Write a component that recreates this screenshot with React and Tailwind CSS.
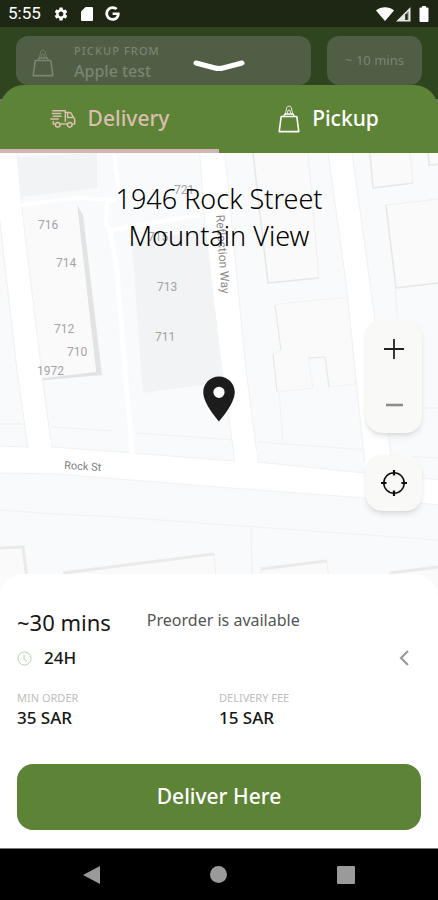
import React, { useState } from 'react';
import { FaGoogle } from 'react-icons/fa';
import { MdSettings, MdLocationOn } from 'react-icons/md';

const houses = [
  { n: '721', x: 174, y: 194 },
  { n: '716', x: 38, y: 229 },
  { n: '714', x: 56, y: 267 },
  { n: '715', x: 148, y: 241 },
  { n: '713', x: 157, y: 291 },
  { n: '712', x: 54, y: 333 },
  { n: '711', x: 155, y: 341 },
  { n: '710', x: 67, y: 356 },
  { n: '1972', x: 37, y: 375 },
];

function BagIcon({ className }) {
  return (
    <svg className={className} viewBox="0 0 22 28" fill="none" stroke="currentColor" aria-hidden="true">
      <path d="M3.2 11.5h15.6l2 15.1H1.2z" strokeWidth="1.6" strokeLinejoin="round" />
      <path d="M5.5 11.5 7 9h8l1.5 2.5" strokeWidth="1.3" />
      <path d="M7.4 8.8 8.6 3c.3-1.2 1-1.8 2.4-1.8s2.1.6 2.4 1.8l1.2 5.8M9.4 8.5l.6-3.3h2l.6 3.3" strokeOpacity="0.8" />
    </svg>
  );
}

function TruckIcon({ className }) {
  return (
    <svg className={className} viewBox="0 0 28 22" fill="none" stroke="currentColor" strokeWidth="1.6" strokeLinecap="round" strokeLinejoin="round" aria-hidden="true">
      <path d="M3 2h13.5v11.5M2.5 5h9M3.5 8H12M1 11h8M3.5 14v2.5h1.7M11.5 16.5h6.7" />
      <path d="M16.5 4H21c1 0 1.5.4 2 1.2l2.3 4.3c.9.5 1.3 1.2 1.3 2.2v4.8h-1.8M19 4v5.5h6" />
      <circle cx="8.3" cy="17.3" r="2.5" />
      <circle cx="21.3" cy="17.3" r="2.5" />
    </svg>
  );
}

function StatusBar() {
  return (
    <div className="flex h-[27px] items-center justify-between bg-[#1d2714] px-2 text-white">
      <div className="flex items-center gap-3">
        <span className="font-[Roboto,sans-serif] text-[17px]">5:55</span>
        <MdSettings className="size-4" />
        <svg className="h-[14px] w-3" viewBox="0 0 12 14" fill="currentColor" aria-hidden="true">
          <path d="M4.5 0H11a1 1 0 0 1 1 1v12a1 1 0 0 1-1 1H1a1 1 0 0 1-1-1V4.500z" />
        </svg>
        <FaGoogle className="size-[15px]" />
      </div>
      <div className="flex items-center gap-0.5">
        <svg className="h-4 w-[18px]" viewBox="0 0 18 16" fill="currentColor" aria-hidden="true">
          <path d="M0 4.5C5 .2 13 .2 18 4.5L9 15z" />
        </svg>
        <svg className="size-4" viewBox="0 0 16 16" aria-hidden="true">
          <path d="M0 15.5 14.5 1v14.5z" fill="#e5e7e3" />
          <path d="M9 8.5 12.5 5v9H9z" fill="#737a6e" />
          <path d="M9.5 8h2v6h-2z" fill="#1d2714" />
        </svg>
        <svg className="ml-1 h-4 w-3" viewBox="0 0 12 16" fill="currentColor" aria-hidden="true">
          <path d="M4 0h4v1.5h1.5a1 1 0 0 1 1 1V15a1 1 0 0 1-1 1h-7a1 1 0 0 1-1-1V2.5a1 1 0 0 1 1-1H4z" />
        </svg>
      </div>
    </div>
  );
}

function StreetMap() {
  return (
    <svg className="absolute inset-x-0 top-0 h-[calc(100%+24px)] w-full" viewBox="0 153 438 445" preserveAspectRatio="xMidYMid slice" aria-hidden="true">
      <path d="M0 153h438v445H0z" fill="#f9fafb" />

      {/* lot lines */}
      <g fill="none" stroke="#eff1f2">
        <path d="M0 424h26M52 427l61 4M137 433l98 7M258 442l110 8M392 408h46M391 455l47 3" />
        <path d="M0 510l55 4 65 3 80 6 238 17M251 526l1 48M279 392l4 50M395 288l3 35M0 222l17 148" />
      </g>

      {/* buildings */}
      <path d="M17 157l80-4v35l-75 9z" fill="#f1f3f5" />
      <path d="M132 243l73-14 17 153-79 11z" fill="#f1f3f5" />
      <g fill="#fafafa" stroke="#efefef">
        <path d="M253 153l15 130 51-5-11-125z" />
        <path d="M370 153l3 35 40-5-3-30z" />
        <path d="M386 205l10 83 60-7V197z" />
        <path d="M428 150l1 15 12-1v-14z" />
        <path d="M275 305l6 45-8 4 4 38 36-4-5-30 17-1 4 30 27-3-5-87-56 5z" stroke="#f2f3f3" />
        <path d="M-2 549l25-2 4 52H-2zM63 574l151-20 4 45H63zM261 569l66-8 4 38h-70zM390 573l50-6v32h-50z" />
      </g>
      <g fill="none" stroke="#e6e7e7" strokeWidth="1.5">
        <path d="M253 153l15 130 51-5M370 153l3 35 40-5M386 205l10 83 42-5M428 150l1 15 12-1" />
        <path d="M275 305l6 45M273 354l4 38M308 358l17-1 4 30" strokeWidth="1" />
      </g>
      <g fill="none" stroke="#e9eae9" strokeWidth="3">
        <path d="M0 548l23-1 4 30M63 573l151-19M261 569l66-8M390 573l48-6" />
      </g>
      <path d="M77 205l6 10 19 160-66 6-1-2 61-8z" fill="#e2e4e3" />
      <path d="M15 213l62-8 19 167-61 7z" fill="#fafafa" />

      {/* streets */}
      <g fill="#fff" stroke="#f0f1f2">
        <path d="M-2 140h19v15l5 55 21 173 9 66H28l-11-79L-2 205z" />
        <path d="M199 145l6 80 15 130 15 107h23l-12-92-22-225z" />
        <path d="M327 145l19 138 20 192h27l-18-155-24-175z" />
        <path d="M-2 446l30 1h24l81 6 87 7 38 2 107 11 75 7v25l-75-7-147-11-161-13-59-1z" />
      </g>
      <path d="M29 440h22l2 20H29zM234 450h23l1 20h-22zM364 462h26l2 22h-26z" fill="#fff" />
      <g fill="none" stroke="#fff" strokeWidth="4">
        <path d="M14 206l63-8 40 2M114 153l5 40M107 200l-1 24 4 6 90-15" />
        <path d="M110 230l7 40 8 100 8 90" strokeWidth="5" />
      </g>

      <g fill="#a3a3a3" fontFamily="Roboto, sans-serif" fontSize="12">
        {houses.map((h) => (
          <text key={h.n} x={h.x} y={h.y}>{h.n}</text>
        ))}
        <text x="64" y="469" fontSize="11" transform="rotate(3 64 469)" fill="#808080">Rock St</text>
        <text x="216" y="215" transform="rotate(86 216 215)" fill="#8a8a8a">Reflection Way</text>
      </g>
    </svg>
  );
}

function Tab({ active, onClick, children }) {
  return (
    <button
      type="button"
      role="tab"
      aria-selected={active}
      onClick={onClick}
      className={`flex flex-1 items-center justify-center gap-3 border-b-4 pt-1 text-[21px] font-medium ${
        active ? 'border-[#d2b4b4] text-[#d8bfae]' : 'border-transparent text-white'
      }`}
    >
      {children}
    </button>
  );
}

function Fact({ label, value }) {
  return (
    <div className="flex-1">
      <dt className="text-[11px] leading-4 text-[#bdbdbd]">{label}</dt>
      <dd className="text-[17px] leading-6 font-medium">{value}</dd>
    </div>
  );
}

export default function App() {
  const [tab, setTab] = useState('delivery');

  return (
    <div className="flex min-h-screen flex-col bg-white font-['Noto_Sans',sans-serif] text-[#161616]">
      <StatusBar />

      <header className="relative flex gap-4 bg-[#2f451f] px-4 pt-[9px] text-[#7a8572]">
        <div className="flex h-[49px] flex-1 items-center gap-5 rounded-xl bg-[#4f5e45] px-4 pt-1">
          <BagIcon className="h-7 w-[22px]" />
          <div>
            <p className="text-[11px] leading-4 font-medium tracking-widest">PICKUP FROM</p>
            <p className="text-base leading-6 font-medium">Apple test</p>
          </div>
        </div>
        <div className="flex h-[49px] w-[95px] items-center justify-center rounded-xl bg-[#4f5e45] text-[13px]">~ 10 mins</div>
        <button type="button" aria-label="Close" className="absolute inset-x-0 top-8 mx-auto w-[54px] text-white">
          <svg className="h-3.5 w-full" viewBox="0 0 54 14" fill="none" stroke="currentColor" strokeWidth="5" strokeLinecap="round" strokeLinejoin="round" aria-hidden="true">
            <path d="M4 4l19 5q4 1 8 0l19-5" />
          </svg>
        </button>
      </header>

      <div className="bg-linear-to-b from-[#2f451f] from-20% to-[#6d7668] to-20%">
        <div role="tablist" className="flex h-[68px] rounded-t-3xl bg-[#5d8337]">
          <Tab active={tab === 'delivery'} onClick={() => setTab('delivery')}>
            <TruckIcon className="h-[22px] w-[26px]" />
            Delivery
          </Tab>
          <Tab active={tab === 'pickup'} onClick={() => setTab('pickup')}>
            <BagIcon className="h-7 w-[22px]" />
            Pickup
          </Tab>
        </div>
      </div>

      <main className="relative flex flex-1 flex-col">
        <StreetMap />
        <h1 className="relative pt-[27px] text-center text-[27px] leading-[37px] font-light text-black">
          1946 Rock Street
          <br />
          Mountain View
        </h1>
        <MdLocationOn className="absolute top-1/2 left-1/2 size-[54px] -translate-x-1/2 translate-y-2 text-[#1c1c1c]" />
        <div className="absolute right-4 bottom-[63px] flex flex-col gap-[22px]">
          <div className="flex w-14 flex-col rounded-2xl bg-[#f9f9f8] pt-0.5 shadow-md">
            <button type="button" aria-label="Zoom in" className="flex h-14 items-center justify-center">
              <svg className="size-5" viewBox="0 0 20 20" stroke="#222" strokeWidth="1.8" aria-hidden="true">
                <path d="M10 0v20M0 10h20" />
              </svg>
            </button>
            <button type="button" aria-label="Zoom out" className="flex h-14 items-center justify-center">
              <svg className="size-5" viewBox="0 0 20 20" stroke="#8a8a8a" strokeWidth="2.5" aria-hidden="true">
                <path d="M2 10h17" />
              </svg>
            </button>
          </div>
          <button type="button" aria-label="My location" className="flex size-14 items-center justify-center rounded-2xl bg-[#f9f9f8] shadow-md">
            <svg className="size-[26px]" viewBox="0 0 28 28" fill="none" stroke="#111" aria-hidden="true">
              <circle cx="14" cy="14" r="11" strokeWidth="1.7" />
              <path d="M14 0v6M14 22v6M0 14h6M22 14h6" strokeWidth="2.4" />
            </svg>
          </button>
        </div>
      </main>

      <section className="relative rounded-t-3xl bg-white px-[17px] pt-8 pb-[18px]">
        <div className="flex items-start gap-9">
          <p className="text-[22px] leading-8">~30 mins</p>
          <p className="text-base leading-7 text-[#555]">Preorder is available</p>
        </div>
        <div className="mt-2 flex items-center justify-between">
          <p className="flex items-center gap-3 text-[17px] leading-6 font-medium">
            <svg className="size-[15px]" viewBox="0 0 16 16" fill="none" stroke="#b9cdb0" aria-hidden="true">
              <circle cx="8" cy="8" r="7" />
              <path d="M7.5 4v4.5l3 2" />
            </svg>
            24H
          </p>
          <button type="button" aria-label="More details" className="px-3 text-[#9a9a9a]">
            <svg className="h-4 w-2.5" viewBox="0 0 10 16" fill="none" stroke="currentColor" strokeWidth="2.2" aria-hidden="true">
              <path d="M9 1L2 8l7 7" />
            </svg>
          </button>
        </div>
        <dl className="mt-5 flex">
          <Fact label="MIN ORDER" value="35 SAR" />
          <Fact label="DELIVERY FEE" value="15 SAR" />
        </dl>
        <button type="button" className="mt-[34px] h-[66px] w-full rounded-2xl bg-[#5d8337] text-[21px] font-medium text-white">
          Deliver Here
        </button>
      </section>

      <nav className="flex h-[52px] items-center justify-around border-t border-[#777] bg-black px-7 text-[#9a9a9a]">
        <button type="button" aria-label="Back">
          <svg className="size-[18px]" viewBox="0 0 18 18" fill="currentColor" aria-hidden="true">
            <path d="M17 0v18L0 9z" />
          </svg>
        </button>
        <button type="button" aria-label="Home" className="size-[17px] rounded-full bg-[#9a9a9a]" />
        <button type="button" aria-label="Recent apps" className="size-[18px] rounded-[1px] bg-[#9a9a9a]" />
      </nav>
    </div>
  );
}
